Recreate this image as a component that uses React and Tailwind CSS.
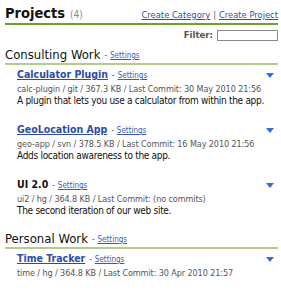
import React from "react";

const F = "font-['DejaVu_Sans_Condensed','Liberation_Sans',sans-serif]";

function Tri() {
  return (
    <svg width="8" height="5" viewBox="0 0 8 5" className="block">
      <polygon points="0,0 8,0 4,5" fill="#2f6fd2" />
    </svg>
  );
}

function Project({ name, bold, meta, desc }) {
  return (
    <div className="h-[55px] pl-[12px] pr-[4px] pt-[2px]">
      <div className="flex h-[16px] items-center justify-between">
        <div className="flex items-baseline whitespace-nowrap">
          {bold ? (
            <span className="text-[10.5px] font-bold text-[#111]">{name}</span>
          ) : (
            <a className="text-[10.5px] font-bold text-[#2c4ca6] underline" href="#">
              {name}
            </a>
          )}
          <span className="ml-[4px] text-[8px] text-[#444]">-</span>
          <a className="ml-[3px] text-[8px] text-[#3a5bb5] underline" href="#">
            Settings
          </a>
        </div>
        <Tri />
      </div>
      <div className="whitespace-nowrap text-[9px] leading-[12px] tracking-[-0.1px] text-[#555]">{meta}</div>
      {desc && (
        <div className="whitespace-nowrap text-[10px] leading-[12px] tracking-[-0.3px] text-[#111]">{desc}</div>
      )}
    </div>
  );
}

function Section({ title, children }) {
  return (
    <div>
      <div className="flex h-[19px] items-end border-b-2 border-[#b3cc8c]">
        <span className="text-[13px] leading-[17px] text-[#111]">{title}</span>
        <span className="ml-[4px] text-[8px] leading-[14px] text-[#444]">-</span>
        <a className="ml-[3px] text-[8px] leading-[14px] text-[#3a5bb5] underline" href="#">
          Settings
        </a>
      </div>
      {children}
    </div>
  );
}

export default function App() {
  return (
    <div className={`${F} h-[297px] w-[281px] overflow-hidden bg-white pl-[5px] pr-[3px]`}>
      <div className="flex h-[25px] items-end justify-between border-b-2 border-[#6aa22c]">
        <div className="flex items-baseline">
          <span className="text-[14.5px] font-bold leading-[20px] text-[#111]">Projects</span>
          <span className="ml-[5px] text-[10px] text-[#888]">(4)</span>
        </div>
        <div className="whitespace-nowrap pb-[2px] text-[9.3px] leading-[12px]">
          <a className="text-[#2f4fa8] underline" href="#">Create Category</a>
          <span className="mx-[3px] text-[#666]">|</span>
          <a className="text-[#2f4fa8] underline" href="#">Create Project</a>
        </div>
      </div>
      <div className="flex h-[21px] items-center justify-end gap-[4px] pb-[1px]">
        <span className="text-[9.5px] font-bold text-[#555]">Filter:</span>
        <input className="h-[11px] w-[61px] border border-[#8a8a8a] bg-white" />
      </div>
      <Section title="Consulting Work">
        <Project
          name="Calculator Plugin"
          meta="calc-plugin / git / 367.3 KB / Last Commit: 30 May 2010 21:56"
          desc="A plugin that lets you use a calculator from within the app."
        />
        <Project
          name="GeoLocation App"
          meta="geo-app / svn / 378.5 KB / Last Commit: 16 May 2010 21:56"
          desc="Adds location awareness to the app."
        />
        <Project
          name="UI 2.0"
          bold
          meta="ui2 / hg / 364.8 KB / Last Commit: (no commits)"
          desc="The second iteration of our web site."
        />
      </Section>
      <Section title="Personal Work">
        <Project
          name="Time Tracker"
          meta="time / hg / 364.8 KB / Last Commit: 30 Apr 2010 21:57"
        />
      </Section>
    </div>
  );
}
